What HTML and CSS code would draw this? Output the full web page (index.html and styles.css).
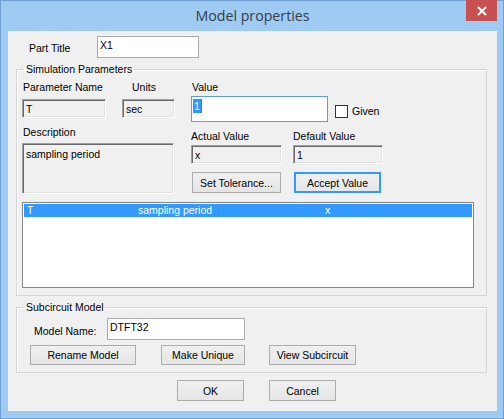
FILE: index.html
```html
<!DOCTYPE html>
<html>
<head>
<meta charset="utf-8">
<link rel="stylesheet" href="styles.css">
</head>
<body>
<div class="window">
  <div class="titlebar">
    <div class="title">Model properties</div>
    <div class="close"><svg width="10" height="10" viewBox="0 0 10 10"><path d="M1 1L9 9M9 1L1 9" stroke="#fff" stroke-width="2"/></svg></div>
  </div>
  <div class="client">
    <div class="part-row">
      <span class="part-label">Part Title</span>
      <div class="textbox part-input">X1</div>
    </div>

    <fieldset class="group sim">
      <legend>Simulation Parameters</legend>
      <div class="sim-top">
        <div class="sim-left">
          <div class="pn-row">
            <div class="pn-col">
              <div class="lbl">Parameter Name</div>
              <div class="sunken pn-field">T</div>
            </div>
            <div class="units-col">
              <div class="lbl units-lbl">Units</div>
              <div class="sunken units-field">sec</div>
            </div>
          </div>
          <div class="lbl desc-lbl">Description</div>
          <div class="sunken desc-field">sampling period</div>
        </div>
        <div class="sim-right">
          <div class="lbl">Value</div>
          <div class="value-row">
            <div class="value-input"><span class="sel">1</span><span class="caret"></span></div>
            <span class="checkbox"></span>
            <span class="given">Given</span>
          </div>
          <div class="av-row">
            <div class="av-col">
              <div class="lbl">Actual Value</div>
              <div class="sunken av-field">x</div>
            </div>
            <div class="dv-col">
              <div class="lbl">Default Value</div>
              <div class="sunken dv-field">1</div>
            </div>
          </div>
          <div class="btn-row">
            <div class="btn btn-tol">Set Tolerance...</div>
            <div class="btn btn-accept default">Accept Value</div>
          </div>
        </div>
      </div>
      <div class="listbox">
        <div class="list-row selected">
          <span class="c1">T</span><span class="c2">sampling period</span><span class="c3">x</span>
        </div>
      </div>
    </fieldset>

    <fieldset class="group sub">
      <legend>Subcircuit Model</legend>
      <div class="mn-row">
        <span class="mn-label">Model Name:</span>
        <div class="textbox mn-input">DTFT32</div>
      </div>
      <div class="sub-btns">
        <div class="btn btn-rename">Rename Model</div>
        <div class="btn btn-unique">Make Unique</div>
        <div class="btn btn-view">View Subcircuit</div>
      </div>
    </fieldset>

    <div class="dlg-btns">
      <div class="btn btn-ok">OK</div>
      <div class="btn btn-cancel">Cancel</div>
    </div>
  </div>
</div>
</body>
</html>
```

FILE: styles.css
```css
html, body {
  margin: 0;
  padding: 0;
  background: #9fcbf3;
}
body {
  font-family: "Liberation Sans", Arial, sans-serif;
  font-size: 10.5px;
  color: #000;
}
.window {
  width: 504px;
  height: 419px;
  box-sizing: border-box;
  border: 1px solid #6f9fd3;
  background: #9fcbf3;
  padding: 0 6px 7px 7px;
}
.titlebar {
  position: relative;
  height: 30px;
}
.title {
  text-align: center;
  font-family: "Open Sans", "Noto Sans", sans-serif;
  font-size: 14.2px;
  line-height: 30px;
  color: #333d47;
}
.close {
  position: absolute;
  top: -1px;
  right: 0;
  width: 31px;
  height: 21px;
  background: #c75050;
  display: flex;
  align-items: center;
  justify-content: center;
}
.client {
  height: 380px;
  background: #f0f0f0;
  overflow: hidden;
}
.part-row {
  display: flex;
  align-items: center;
  margin-top: 5px;
  height: 22px;
}
.part-label {
  margin-left: 21px;
  width: 68px;
  padding-top: 2px;
}
.textbox {
  box-sizing: border-box;
  background: #fff;
  border: 1px solid #ababab;
  padding: 2px 2px;
  line-height: 13px;
}
.part-input {
  width: 102px;
  height: 22px;
}
.group {
  margin: 5px 10px 0 8px;
  border: 1px solid #d5d5d5;
  box-shadow: inset 1px 1px 0 #fff;
  padding: 0 5px 7px 5px;
  min-width: 0;
}
.group legend {
  padding: 0 2px;
  margin-left: 2px;
  line-height: 12px;
}
.lbl {
  line-height: 12px;
  height: 12px;
  white-space: nowrap;
}
.sunken {
  box-sizing: border-box;
  background: #f0f0f0;
  border-style: solid;
  border-width: 1px;
  border-color: #a0a0a0 #fff #fff #a0a0a0;
  box-shadow: inset 1px 1px 0 #696969, inset -1px -1px 0 #e3e3e3;
  padding: 2px 3px;
  line-height: 14px;
}
.sim-top {
  display: flex;
  margin-top: 6px;
}
.sim-left {
  width: 152px;
}
.pn-row {
  display: flex;
}
.pn-col .lbl { padding-left: 1px; }
.pn-field {
  margin-top: 6px;
  width: 84px;
  height: 19px;
}
.units-col {
  margin-left: 16px;
}
.units-lbl {
  padding-left: 10px;
}
.units-field {
  margin-top: 6px;
  width: 53px;
  height: 19px;
}
.desc-lbl {
  margin-top: 8px;
  padding-left: 1px;
}
.desc-field {
  margin-top: 5px;
  width: 152px;
  height: 51px;
  padding-top: 3px;
}
.sim-right {
  margin-left: 17px;
}
.sim-right > .lbl { padding-left: 1px; }
.value-row {
  display: flex;
  align-items: flex-start;
  margin-top: 3px;
}
.value-input {
  box-sizing: border-box;
  width: 137px;
  height: 26px;
  background: #fff;
  border: 1px solid #5a9fe5;
  padding: 2px 1px;
  display: flex;
  align-items: flex-start;
}
.sel {
  background: #3399ff;
  color: #fff;
  line-height: 14px;
  padding: 0 1px;
}
.caret {
  width: 1px;
  height: 14px;
  background: #c0600a;
}
.checkbox {
  box-sizing: border-box;
  width: 13px;
  height: 13px;
  border: 1px solid #333;
  background: #fff;
  margin: 9px 0 0 7px;
}
.given {
  margin: 9px 0 0 4px;
  line-height: 13px;
}
.av-row {
  display: flex;
  margin-top: 8px;
}
.av-field {
  margin-top: 3px;
  width: 91px;
  height: 19px;
}
.dv-col {
  margin-left: 11px;
}
.dv-field {
  margin-top: 3px;
  width: 90px;
  height: 19px;
}
.btn-row {
  display: flex;
  margin-top: 8px;
}
.btn {
  box-sizing: border-box;
  height: 21px;
  border: 1px solid #acacac;
  background: linear-gradient(#f0f0f0, #e5e5e5);
  display: flex;
  align-items: center;
  justify-content: center;
  white-space: nowrap;
}
.btn.default {
  border-color: #3399ff;
  box-shadow: inset 0 0 0 1px #3399ff;
}
.btn-tol {
  margin-left: 1px;
  width: 89px;
}
.btn-accept {
  margin-left: 13px;
  width: 87px;
}
.listbox {
  box-sizing: border-box;
  margin-top: 8px;
  width: 452px;
  height: 86px;
  background: #fff;
  border: 1px solid #828790;
  padding: 1px;
}
.list-row {
  display: flex;
  height: 13px;
  line-height: 13px;
}
.list-row.selected {
  background: #3399ff;
  color: #fff;
}
.c1 { margin-left: 3px; width: 111px; }
.c2 { width: 187px; }
.c3 { }
.sub .mn-row {
  display: flex;
  align-items: center;
  margin-top: 5px;
}
.mn-label {
  margin-left: 12px;
  width: 73px;
  padding-top: 4px;
}
.mn-input {
  width: 138px;
  height: 22px;
}
.sub-btns {
  display: flex;
  margin-top: 5px;
}
.sub-btns .btn { height: 20px; }
.btn-rename { margin-left: 8px; width: 106px; }
.btn-unique { margin-left: 25px; width: 84px; }
.btn-view { margin-left: 24px; width: 87px; }
.dlg-btns {
  display: flex;
  margin-top: 7px;
  padding-left: 169px;
}
.btn-ok { width: 67px; }
.btn-cancel { margin-left: 25px; width: 67px; }
```
